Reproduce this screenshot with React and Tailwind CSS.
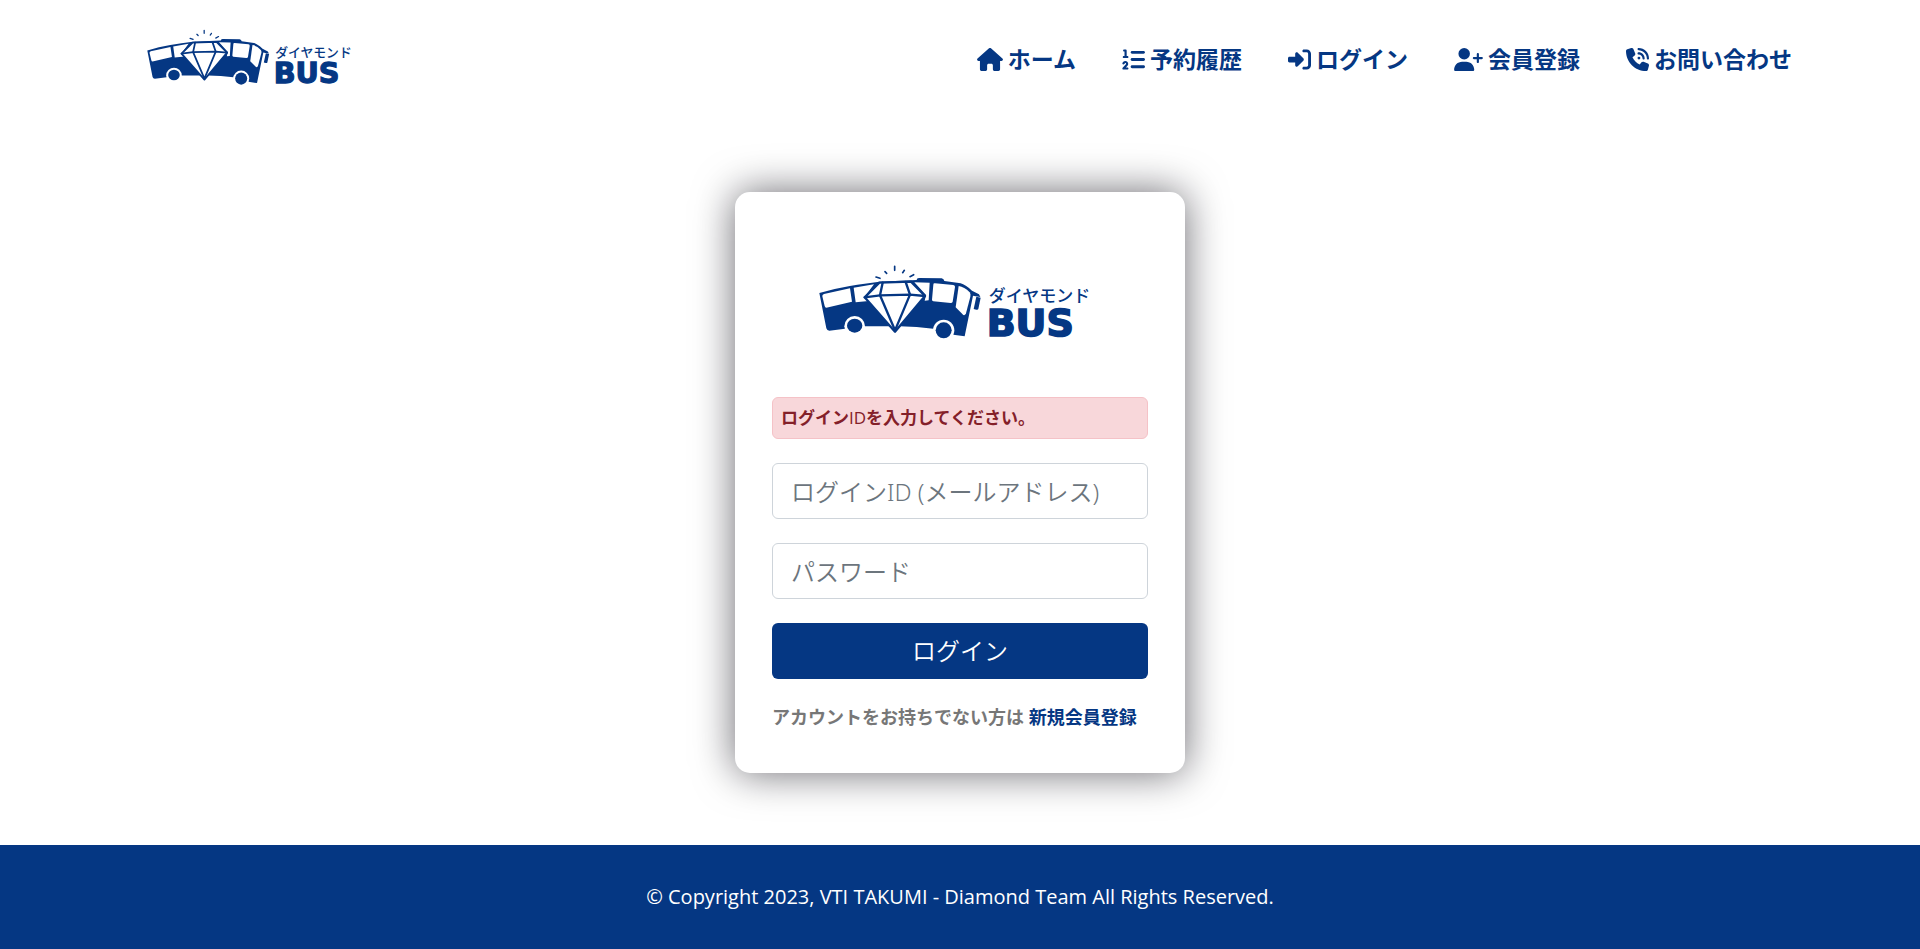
import { FaHouse, FaListOl, FaRightToBracket, FaUserPlus, FaPhoneVolume } from "react-icons/fa6";

const navItems = [
  { label: "ホーム", Icon: FaHouse, size: "w-[26px]" },
  { label: "予約履歴", Icon: FaListOl, size: "w-[23px]" },
  { label: "ログイン", Icon: FaRightToBracket, size: "w-[23px]" },
  { label: "会員登録", Icon: FaUserPlus, size: "w-[29px]" },
  { label: "お問い合わせ", Icon: FaPhoneVolume, size: "w-[23px]" },
];

function Logo({ className }) {
  return (
    <svg viewBox="45 35 870 252" className={className} role="img" aria-label="ダイヤモンド BUS">
      {/* body */}
      <path
        d="M58 128 C120 110 180 101 238 94 L350 89 Q350 83 357 83 L425 84 Q432 86 433 92 L482 99 Q496 103 516 121 L537 132 L541 140 L527 138 L519 136 L494 258 L460 253 L400 235 Q350 229 300 228 L190 228 L135 235 L88 241 Q81 241 79 234 Z"
        fill="#053783"
      />
      {/* windows */}
      <g fill="#fff">
        <path d="M67 138 Q66 133 72 131 L150 114 L156 154 L79 172 Q75 172 74 167 Z" />
        <path d="M161 112 L222 102 L198 134 L206 152 L167 156 Z" />
        <path d="M343 96 L389 97 L386 150 L374 151 L378 134 Z" />
        <path d="M400 103 Q400 98 405 99 L460 104 Q466 105 465 110 L458 154 Q457 158 452 158 L400 153 Q396 152 396 148 Z" />
        <path d="M476 107 Q493 109 509 126 Q513 131 511 139 L498 189 Q496 196 490 194 L467 171 Z" />
        <circle cx="164" cy="228" r="31" />
        <circle cx="431" cy="240" r="32" />
      </g>
      {/* wheels and mirror */}
      <g fill="#053783">
        <ellipse cx="164" cy="226" rx="23" ry="21" />
        <circle cx="431" cy="240" r="24" />
        <path d="M529 139 L542 142 L535 176 Q534 179 529 178 L521 176 Z" />
      </g>
      {/* diamond */}
      <path d="M266 229 L305 229 L286 256 Z" fill="#fff" />
      <g stroke="#053783" strokeLinejoin="round" strokeLinecap="round">
        <path d="M238 97 L333 94 L375 137 L285 244 L194 141 Z" fill="#fff" strokeWidth="7" />
        <path d="M194 141 L240 135 L330 133 L375 137" fill="none" strokeWidth="7" />
        <path d="M248 97 L240 135 L285 240 L330 133 L317 95" fill="none" strokeWidth="7" />
      </g>
      {/* sparkles */}
      <path
        d="M228 80 L240 84 M255 64 L260 69 M284 48 V60 M313 60 L308 67 M341 73 L330 79"
        stroke="#053783"
        strokeWidth="5"
        strokeLinecap="round"
        fill="none"
      />
      <text x="566" y="156" fontSize="51" className="fill-[#053783] font-['Noto_Sans_CJK_JP',sans-serif] font-medium">
        ダイヤモンド
      </text>
      <text
        x="560"
        y="256"
        fontSize="114"
        stroke="#053783"
        strokeWidth="5"
        className="fill-[#053783] font-['DejaVu_Sans',sans-serif] font-bold"
      >
        BUS
      </text>
    </svg>
  );
}

const field =
  "h-14 w-full rounded-md border border-[#ced4da] bg-white px-[18px] font-['Noto_Sans','Noto_Sans_CJK_JP',sans-serif] text-2xl font-[350] text-[#212529] placeholder:text-[#6c757d] placeholder:opacity-100";

export default function App() {
  return (
    <div className="flex min-h-screen flex-col bg-white font-['Open_Sans','Noto_Sans_CJK_JP',sans-serif]">
      <header className="flex items-start justify-between pt-[27px] pr-32 pb-6 pl-36">
        <a href="#home">
          <Logo className="block w-[219px]" />
        </a>
        <nav className="flex items-center gap-[46px] pt-4">
          {navItems.map(({ label, Icon, size }) => (
            <a key={label} href="#" className="flex items-center gap-[5px] text-[23px] leading-8 font-bold text-[#053783]">
              <Icon className={`h-[23px] ${size}`} />
              {label}
            </a>
          ))}
        </nav>
      </header>

      <main className="flex flex-1 items-start justify-center pt-[78px] pb-[72px]">
        <form
          className="flex w-[450px] flex-col gap-6 rounded-[15px] bg-white px-[37px] pt-[70px] pb-[42px] shadow-[0_0_40px_rgba(8,7,16,0.6)]"
          onSubmit={(e) => e.preventDefault()}
        >
          <Logo className="mb-[27px] block h-[84px] w-[290px] self-center" />
          <p role="alert" className="rounded-md border border-[#f5c2c7] bg-[#f8d7da] px-2 py-2 text-[17px] leading-6 font-bold text-[#842029]">
            ログイン<span className="font-normal">ID</span>を入力してください。
          </p>
          <input type="email" aria-label="ログインID (メールアドレス)" placeholder="ログインID (メールアドレス)" className={field} />
          <input type="password" aria-label="パスワード" placeholder="パスワード" className={field} />
          <button type="submit" className="h-14 w-full rounded-md bg-[#053783] text-2xl font-[350] text-white">
            ログイン
          </button>
          <p className="text-lg leading-7 font-bold whitespace-nowrap text-[#777]">
            アカウントをお持ちでない方は{" "}
            <a href="#register" className="text-[#053783]">
              新規会員登録
            </a>
          </p>
        </form>
      </main>

      <footer className="bg-[#053783] py-[38px] text-center text-xl leading-7 text-white">
        © Copyright 2023, VTI TAKUMI - Diamond Team All Rights Reserved.
      </footer>
    </div>
  );
}
